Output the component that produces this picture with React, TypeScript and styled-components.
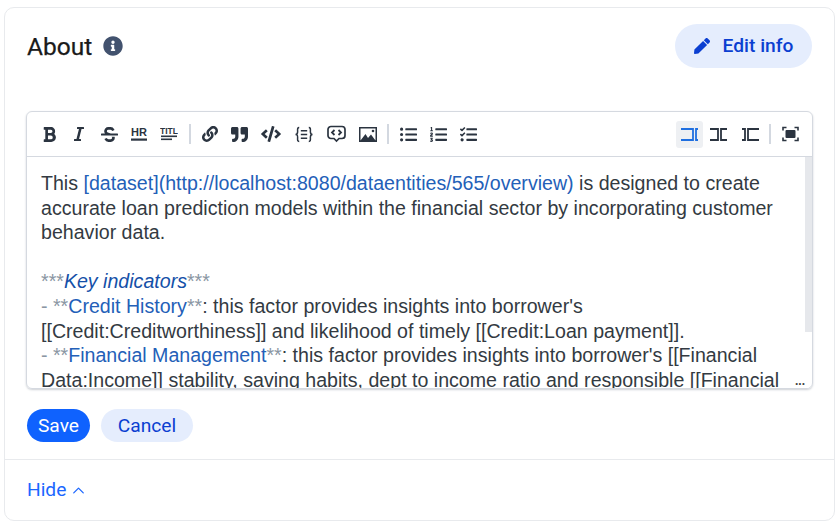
import React from "react";
import styled, { createGlobalStyle } from "styled-components";
import {
  FaBold, FaItalic, FaStrikethrough, FaLink, FaQuoteRight, FaCode,
  FaListUl, FaListOl, FaTasks, FaInfoCircle, FaPen,
} from "react-icons/fa";
import { ChevronUp } from "lucide-react";

const Global = createGlobalStyle`
  html, body { margin: 0; padding: 0; background: #fff; }
  body { width: 840px; height: 527px; overflow: hidden; font-family: Roboto, sans-serif; }
`;

const Page = styled.div`
  padding: 7px 5px 6px 4px;
  box-sizing: border-box;
  height: 527px;
`;

const Card = styled.section`
  border: 1px solid #e8eaed;
  border-radius: 10px;
  height: 514px;
  box-sizing: border-box;
  display: flex;
  flex-direction: column;
`;

const Header = styled.header`
  display: flex;
  justify-content: space-between;
  align-items: center;
  padding: 16px 22px 0 22px;
  height: 44px;
`;

const TitleRow = styled.div`
  display: flex;
  align-items: center;
  gap: 11px;
`;

const Title = styled.h2`
  margin: 0;
  font: 400 24.5px/32px "Roboto", sans-serif;
  -webkit-text-stroke: 0.25px #1a1a1a;
  color: #1a1a1a;
  padding-top: 2px;
`;

const InfoIcon = styled(FaInfoCircle)`
  width: 20px;
  height: 20px;
  color: #42526e;
`;

const PillButton = styled.button<{ $primary?: boolean; $h?: number }>`
  border: 0;
  border-radius: 999px;
  height: ${(p) => p.$h ?? 33}px;
  background: ${(p) => (p.$primary ? "#0f62fe" : "#e5edfd")};
  color: ${(p) => (p.$primary ? "#fff" : "#0b3fd1")};
  font: 400 19.2px/1 "Roboto", sans-serif;
  display: inline-flex;
  align-items: center;
  justify-content: center;
  padding: 0;
`;

const EditButton = styled(PillButton)`
  width: 137px;
  gap: 13px;
  font-weight: 500;
`;

const Editor = styled.div`
  margin: 43px 21px 0 21px;
  height: 278px;
  box-sizing: border-box;
  border: 1px solid #d5d9e0;
  border-radius: 6px;
  box-shadow: 0 1px 2px rgba(60, 70, 90, 0.25);
  display: flex;
  flex-direction: column;
  overflow: hidden;
`;

const Toolbar = styled.div`
  height: 45px;
  flex: none;
  box-sizing: border-box;
  border-bottom: 1px solid #d5d9e0;
  display: flex;
  align-items: center;
  padding: 0 7px 0 7px;
  color: #2b3440;
`;

const ToolSlot = styled.span<{ $active?: boolean; $w?: number }>`
  width: ${(p) => p.$w ?? 30}px;
  height: 27px;
  flex: none;
  border-radius: 3px;
  display: inline-flex;
  align-items: center;
  justify-content: center;
  background: ${(p) => (p.$active ? "#eef0f3" : "transparent")};
  color: ${(p) => (p.$active ? "#1f6fe0" : "inherit")};
  svg { display: block; }
`;

const ToolDivider = styled.span<{ $ml?: number }>`
  width: 2px;
  height: 20px;
  margin: 0 4px 0 ${(p) => p.$ml ?? 3}px;
  background: #d3d8e0;
  flex: none;
`;

const Spacer = styled.span`
  flex: 1;
`;

const BodyWrap = styled.div`
  flex: 1;
  position: relative;
  overflow: hidden;
`;

const Body = styled.div`
  padding: 14px 20px 0 14px;
  font: 400 19.6px/24.6px "Liberation Sans", Arial, sans-serif;
  color: #333a42;
  white-space: pre-wrap;
`;

const Link = styled.span`
  color: #2360b8;
`;

const Mark = styled.span`
  color: #8a96a3;
`;

const Emph = styled.em`
  color: #1450a8;
`;

const Scroll = styled.span`
  position: absolute;
  top: 0;
  right: 0;
  width: 7px;
  height: 175px;
  background: #e6e8ec;
`;

const More = styled.span`
  position: absolute;
  right: 3px;
  bottom: 0;
  width: 18px;
  height: 14px;
  background: #fff;
  font: 700 12px/14px "Liberation Sans", sans-serif;
  color: #444;
  text-align: center;
`;

const Actions = styled.div`
  display: flex;
  gap: 11px;
  padding: 20px 22px 0;
`;

const SaveButton = styled(PillButton)`
  width: 63px;
`;

const CancelButton = styled(PillButton)`
  width: 92px;
`;

const Footer = styled.footer`
  margin-top: 17px;
  border-top: 1px solid #e8eaed;
  padding: 18px 22px 0;
  display: flex;
  align-items: center;
  gap: 3px;
  color: #1a66ff;
  font: 400 19.2px/24px "Roboto", sans-serif;
`;

const PanesIcon = ({ kind }: { kind: "edit" | "split" | "preview" }) => {
  const left = kind === "edit" ? "M1 3h12v11H1" : kind === "split" ? "M1 3h8v11H1" : "M1 3h3v11H1";
  const right = kind === "edit" ? "M18 3h-2v11h2" : kind === "split" ? "M18 3h-6v11h6" : "M18 3H7v11h11";
  return (
    <svg width="19" height="17" viewBox="0 0 19 17" fill="none" stroke="currentColor" strokeWidth="1.8">
      <path d={left} />
      <path d={right} />
    </svg>
  );
};

const HrIcon = () => (
  <svg width="18" height="17" viewBox="0 0 18 17" fill="currentColor">
    <text x="9" y="10" textAnchor="middle" fontFamily="'Liberation Sans', sans-serif" fontWeight="700" fontSize="11">HR</text>
    <rect x="1" y="12.5" width="16" height="2.2" />
  </svg>
);

const TitleIcon = () => (
  <svg width="18" height="17" viewBox="0 0 18 17" fill="currentColor">
    <text x="9" y="8" textAnchor="middle" fontFamily="'Liberation Sans', sans-serif" fontWeight="700" fontSize="8.5">TITL</text>
    <rect x="1" y="9.5" width="16" height="1.6" />
    <rect x="1" y="12.5" width="11" height="1.6" />
  </svg>
);

const TemplateIcon = () => (
  <svg width="20" height="17" viewBox="0 0 18 16" fill="none" stroke="currentColor" strokeWidth="1.4">
    <path d="M4.5 1.5C2.5 1.5 3 3.5 3 5.5S2.5 8 1 8c1.5 0 2 .5 2 2.5s-.5 4 1.500 4" />
    <path d="M13.5 1.5c2 0 1.500 2 1.500 4S15.500 8 17 8c-1.500 0-2 .5-2 2.500s.5 4-1.500 4" />
    <path d="M6 4.500h6M6 8h6M6 11.500h6" />
  </svg>
);

const CommentCodeIcon = () => (
  <svg width="19" height="18" viewBox="0 0 19 18" fill="none" stroke="currentColor">
    <path d="M4 1.500h11a3 3 0 0 1 3 3v6a3 3 0 0 1-3 3h-3l-2.500 2.500L7 13.500H4a3 3 0 0 1-3-3v-6a3 3 0 0 1 3-3z" strokeWidth="1.700" />
    <path d="M7.500 5L5 7.500 7.500 10M11.500 5L14 7.500 11.500 10" strokeWidth="1.800" />
  </svg>
);

const PictureIcon = () => (
  <svg width="18" height="15" viewBox="0 0 18 15">
    <rect width="18" height="15" fill="currentColor" />
    <path d="M1.500 1.500h15v12l-4.500-6-3 3.500-2.500-4-5 6.500z" fill="#fff" />
    <circle cx="14" cy="4" r="1.300" fill="currentColor" />
  </svg>
);

const ScreenIcon = () => (
  <svg width="17" height="16" viewBox="0 0 17 16" fill="none" stroke="currentColor" strokeWidth="1.600">
    <path d="M1 4.500V1.500h3.500M12.500 1.500H16v3M16 11.500v3h-3.500M4.500 14.500H1v-3" />
    <rect x="3.500" y="4" width="10" height="8" rx="1" fill="currentColor" stroke="none" />
  </svg>
);

const App = () => (
  <Page>
    <Global />
    <Card>
      <Header>
        <TitleRow>
          <Title>About</Title>
          <InfoIcon />
        </TitleRow>
        <EditButton $h={44}>
          <FaPen size={16} />
          Edit info
        </EditButton>
      </Header>
      <Editor>
        <Toolbar>
          <ToolSlot><FaBold size={17} /></ToolSlot>
          <ToolSlot><FaItalic size={16} /></ToolSlot>
          <ToolSlot><FaStrikethrough size={17} /></ToolSlot>
          <ToolSlot><HrIcon /></ToolSlot>
          <ToolSlot><TitleIcon /></ToolSlot>
          <ToolDivider $ml={5} />
          <ToolSlot><FaLink size={16} /></ToolSlot>
          <ToolSlot $w={29}><FaQuoteRight size={17} /></ToolSlot>
          <ToolSlot $w={34}><FaCode size={20} /></ToolSlot>
          <ToolSlot $w={32}><TemplateIcon /></ToolSlot>
          <ToolSlot $w={32}><CommentCodeIcon /></ToolSlot>
          <ToolSlot $w={32}><PictureIcon /></ToolSlot>
          <ToolDivider />
          <ToolSlot><FaListUl size={17} /></ToolSlot>
          <ToolSlot><FaListOl size={17} /></ToolSlot>
          <ToolSlot><FaTasks size={17} /></ToolSlot>
          <Spacer />
          <ToolSlot $active $w={27}><PanesIcon kind="edit" /></ToolSlot>
          <ToolSlot $w={31}><PanesIcon kind="split" /></ToolSlot>
          <ToolSlot $w={32}><PanesIcon kind="preview" /></ToolSlot>
          <ToolDivider />
          <ToolSlot><ScreenIcon /></ToolSlot>
        </Toolbar>
        <BodyWrap>
          <Body>
            This <Link>[dataset](http://localhost:8080/dataentities/565/overview)</Link> is designed to create accurate loan prediction models within the financial sector by incorporating customer behavior data.
            {"\n\n"}
            <Mark>***</Mark><Emph>Key indicators</Emph><Mark>***</Mark>
            {"\n"}
            <Mark>- **</Mark><Link>Credit History</Link><Mark>**</Mark>: this factor provides insights into borrower's [[Credit:Creditworthiness]] and likelihood of timely [[Credit:Loan payment]].
            {"\n"}
            <Mark>- **</Mark><Link>Financial Management</Link><Mark>**</Mark>: this factor provides insights into borrower's [[Financial Data:Income]] stability, saving habits, dept to income ratio and responsible [[Financial Data:Debt]] management.
          </Body>
          <Scroll />
          <More>...</More>
        </BodyWrap>
      </Editor>
      <Actions>
        <SaveButton $primary>Save</SaveButton>
        <CancelButton>Cancel</CancelButton>
      </Actions>
      <Footer>
        Hide
        <ChevronUp size={19} strokeWidth={1.6} />
      </Footer>
    </Card>
  </Page>
);

export default App;
